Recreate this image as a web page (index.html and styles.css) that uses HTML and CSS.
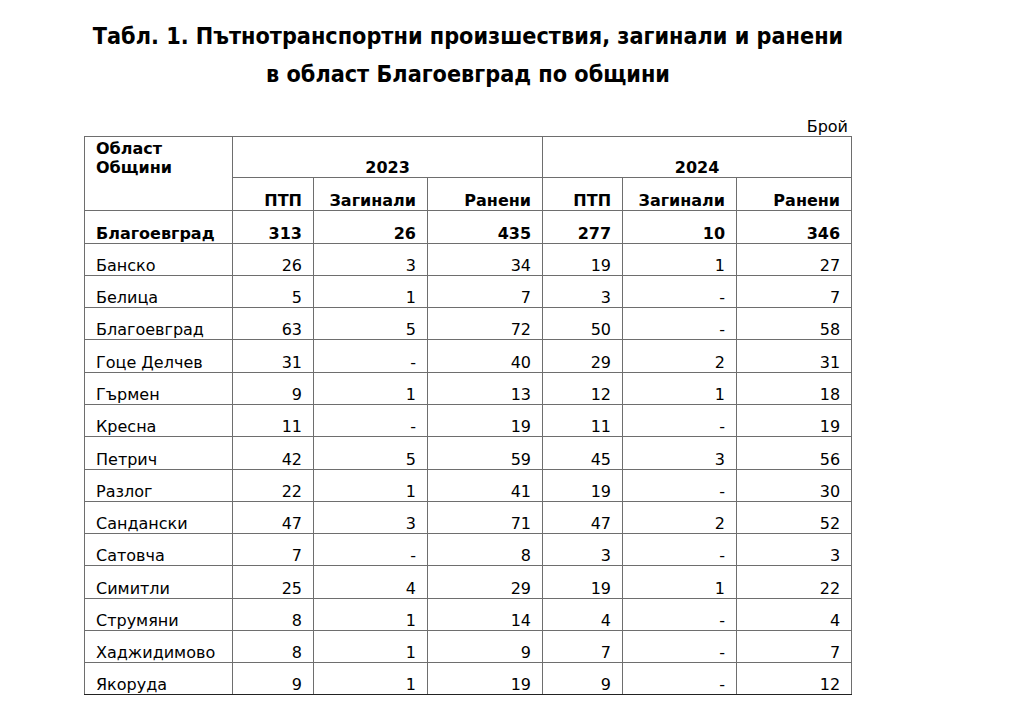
FILE: index.html
```html
<!DOCTYPE html>
<html lang="bg">
<head>
<meta charset="utf-8">
<title>Табл. 1</title>
<link rel="stylesheet" href="styles.css">
</head>
<body>
<div class="page">
  <h1 class="title"><span>Табл. 1. Пътнотранспортни произшествия, загинали и ранени</span><span>в област Благоевград по общини</span></h1>
  <div class="unit">Брой</div>
  <table class="stats">
    <colgroup>
      <col class="c-name"><col class="c-a"><col class="c-b"><col class="c-c"><col class="c-a2"><col class="c-b"><col class="c-c">
    </colgroup>
    <thead>
      <tr class="h1">
        <th rowspan="2" class="corner">Област<br>Общини</th>
        <th colspan="3" class="year">2023</th>
        <th colspan="3" class="year">2024</th>
      </tr>
      <tr class="h2">
        <th>ПТП</th><th>Загинали</th><th>Ранени</th>
        <th>ПТП</th><th>Загинали</th><th>Ранени</th>
      </tr>
    </thead>
    <tbody>
      <tr class="total"><td>Благоевград</td><td>313</td><td>26</td><td>435</td><td>277</td><td>10</td><td>346</td></tr>
      <tr><td>Банско</td><td>26</td><td>3</td><td>34</td><td>19</td><td>1</td><td>27</td></tr>
      <tr><td>Белица</td><td>5</td><td>1</td><td>7</td><td>3</td><td>-</td><td>7</td></tr>
      <tr><td>Благоевград</td><td>63</td><td>5</td><td>72</td><td>50</td><td>-</td><td>58</td></tr>
      <tr><td>Гоце Делчев</td><td>31</td><td>-</td><td>40</td><td>29</td><td>2</td><td>31</td></tr>
      <tr><td>Гърмен</td><td>9</td><td>1</td><td>13</td><td>12</td><td>1</td><td>18</td></tr>
      <tr><td>Кресна</td><td>11</td><td>-</td><td>19</td><td>11</td><td>-</td><td>19</td></tr>
      <tr><td>Петрич</td><td>42</td><td>5</td><td>59</td><td>45</td><td>3</td><td>56</td></tr>
      <tr><td>Разлог</td><td>22</td><td>1</td><td>41</td><td>19</td><td>-</td><td>30</td></tr>
      <tr><td>Сандански</td><td>47</td><td>3</td><td>71</td><td>47</td><td>2</td><td>52</td></tr>
      <tr><td>Сатовча</td><td>7</td><td>-</td><td>8</td><td>3</td><td>-</td><td>3</td></tr>
      <tr><td>Симитли</td><td>25</td><td>4</td><td>29</td><td>19</td><td>1</td><td>22</td></tr>
      <tr><td>Струмяни</td><td>8</td><td>1</td><td>14</td><td>4</td><td>-</td><td>4</td></tr>
      <tr><td>Хаджидимово</td><td>8</td><td>1</td><td>9</td><td>7</td><td>-</td><td>7</td></tr>
      <tr><td>Якоруда</td><td>9</td><td>1</td><td>19</td><td>9</td><td>-</td><td>12</td></tr>
    </tbody>
  </table>
</div>
</body>
</html>
```

FILE: styles.css
```css
html, body {
  margin: 0;
  padding: 0;
  background: #ffffff;
  color: #000000;
}

.page {
  width: 768px;
  margin-left: 84px;
  padding-top: 17px;
  font-family: "DejaVu Sans", Verdana, sans-serif;
  font-size: 16px;
}

.title {
  margin: 0;
  display: flex;
  flex-direction: column;
  align-items: center;
  font-family: "Liberation Sans Narrow", "DejaVu Sans Condensed", "Liberation Sans", sans-serif;
  font-weight: bold;
  font-size: 23.2px;
  line-height: 37.7px;
  white-space: nowrap;
}

.unit {
  margin-top: 26px;
  text-align: right;
  padding-right: 4px;
  line-height: 18px;
  height: 18px;
}

.stats {
  margin-top: 0;
  border-collapse: collapse;
  table-layout: fixed;
  width: 767px;
}

.c-name { width: 148px; }
.c-a { width: 81px; }
.c-a2 { width: 80px; }
.c-b { width: 114px; }
.c-c { width: 115px; }

.stats th,
.stats td {
  border: 1px solid #6e6e6e;
  padding: 0 11px 0 11px;
  vertical-align: bottom;
  text-align: right;
  line-height: 18px;
  white-space: nowrap;
}

.stats th {
  font-weight: bold;
}

.stats .corner {
  text-align: left;
  vertical-align: top;
  padding-top: 2px;
  line-height: 19px;
}

.stats .year {
  text-align: center;
}

.h1 { height: 41px; }
.h2 { height: 33px; }

.stats tbody tr { height: 32.27px; }

.stats tbody td:first-child {
  text-align: left;
}

.total td {
  font-weight: bold;
}

.stats tbody tr:last-child td {
  border-bottom-color: #222222;
}
```
